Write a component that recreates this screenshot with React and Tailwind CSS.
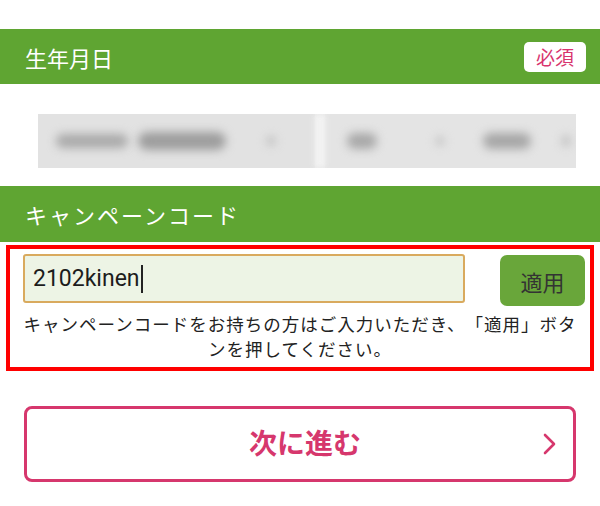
export default function App() {
  return (
    <div className="w-[600px] h-[506px] bg-white overflow-hidden font-['Noto_Sans_CJK_JP','Noto_Sans',sans-serif]">
      <div className="h-[29px]" />
      <div className="h-[55px] bg-[#5fa532] flex items-center justify-between pl-[25px] pr-[14px]">
        <span className="text-white text-[22px] leading-none">生年月日</span>
        <span className="w-[62px] h-[30px] bg-white rounded-[5px] flex items-center justify-center text-[#d8336e] text-[19px] leading-none">必須</span>
      </div>
      <div className="pl-[38px] pr-[24px] pt-[30px] pb-[18px]">
        <div className="h-[54px] flex bg-[#e6e6e6] overflow-hidden">
          <div className="w-[277px] h-full flex items-center gap-[10px] pl-[18px] bg-[#e2e2e2]">
            <div className="w-[72px] h-[14px] rounded-full bg-[#a9a9a9] blur-[5px]" />
            <div className="w-[88px] h-[18px] rounded-full bg-[#9d9d9d] blur-[5px]" />
            <div className="ml-[30px] w-[10px] h-[10px] rounded-full bg-[#c4c4c4] blur-[4px]" />
          </div>
          <div className="w-[10px] h-full bg-[#f4f4f4] blur-[3px]" />
          <div className="flex-1 h-full flex items-center pl-[22px] bg-[#e4e4e4]">
            <div className="w-[30px] h-[16px] rounded-full bg-[#a8a8a8] blur-[5px]" />
            <div className="ml-[58px] w-[10px] h-[10px] rounded-full bg-[#c8c8c8] blur-[4px]" />
            <div className="ml-[38px] w-[48px] h-[16px] rounded-full bg-[#a6a6a6] blur-[5px]" />
            <div className="ml-[30px] w-[10px] h-[12px] rounded-full bg-[#c6c6c6] blur-[4px]" />
          </div>
        </div>
      </div>
      <div className="h-[56px] bg-[#5fa532] flex items-center pl-[25px]">
        <span className="text-white text-[22px] tracking-[2px] leading-none">キャンペーンコード</span>
      </div>
      <div className="mx-[6px] mt-[3px] border-4 border-[#ff0000] pt-[5px] pb-[6px]">
        <div className="flex items-start pl-[13px] pr-[5px]">
          <div className="w-[442px] h-[49px] rounded-[3px] border-2 border-[#d9aa5e] bg-[#edf4e5] flex items-center pl-[8px]">
            <span className="text-[#1c1c1c] text-[23px] font-['Roboto',sans-serif] leading-none">2102kinen</span>
            <span className="w-[2px] h-[28px] bg-[#222] ml-[1px]" />
          </div>
          <div className="ml-auto mt-[1px] w-[85px] h-[51px] rounded-[7px] bg-[#69a63a] flex items-center justify-center text-[#333] text-[22px] leading-none">適用</div>
        </div>
        <p className="mt-[5px] text-center whitespace-nowrap text-[17.5px] tracking-[1px] leading-[25px] text-[#222] [text-spacing-trim:space-all]">
          キャンペーンコードをお持ちの方はご入力いただき、「適用」ボタ<br />ンを押してください。
        </p>
      </div>
      <div className="mx-[24px] mt-[35px] h-[76px] rounded-[8px] border-[3px] border-[#d6376d] relative flex items-center justify-center">
        <span className="text-[#d6376d] text-[28px] font-bold leading-none ml-[10px] -mt-[4px]">次に進む</span>
        <svg className="absolute right-[16px] top-1/2 -translate-y-1/2" width="14" height="22" viewBox="0 0 14 22">
          <path d="M2 2 L11 11 L2 20" fill="none" stroke="#d6376d" strokeWidth="2.6" strokeLinecap="round" strokeLinejoin="round" />
        </svg>
      </div>
    </div>
  );
}
